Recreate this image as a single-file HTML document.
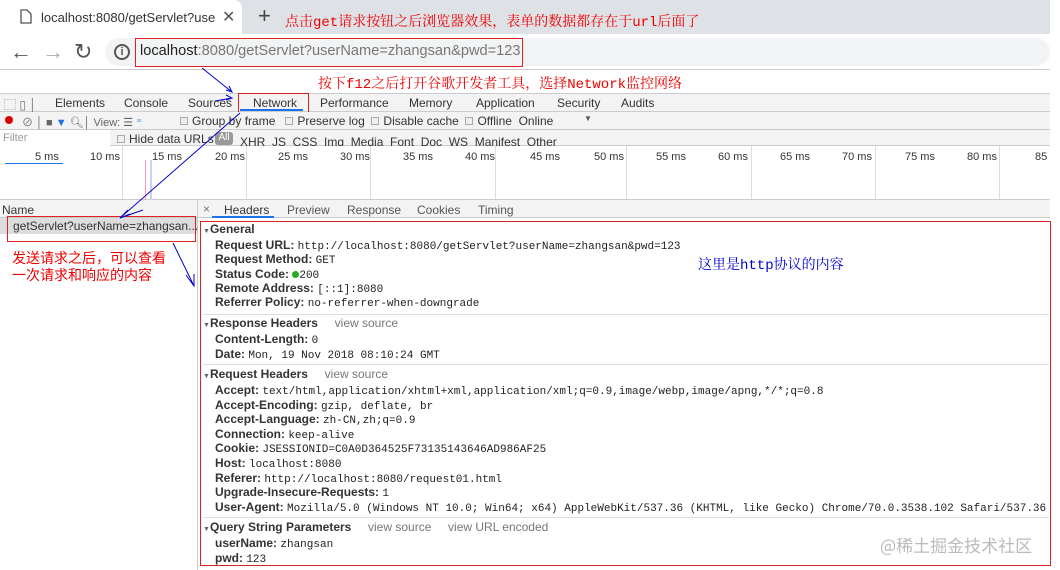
<!DOCTYPE html>
<html><head><meta charset="utf-8"><style>
*{margin:0;padding:0;box-sizing:border-box}
body{width:1060px;height:570px;position:relative;background:#fff;font-family:"Liberation Sans","Noto Sans CJK SC",sans-serif;overflow:hidden;color:#333}
.a{position:absolute;white-space:nowrap}
.red{color:#e00;font-family:"Liberation Mono","Noto Serif CJK SC",serif;font-size:14px;line-height:16px}
.t{font-size:12px;color:#333}
.b{font-weight:bold;color:#333;font-size:12px}
.m{font-family:"Liberation Mono",monospace;font-size:11px;font-weight:normal;color:#222}
.g{color:#777;font-size:12px;font-weight:normal}
.cb{display:inline-block;width:8px;height:8px;border:1px solid #aaa;background:#eee;margin-right:4px;vertical-align:0}
</style></head><body>
<div class="a" style="left:0;top:0;width:1050px;height:34px;background:#dee1e6"></div>
<div class="a" style="left:0;top:0;width:242px;height:35px;background:#fff;border-radius:0 8px 0 0"></div>
<svg class="a" style="left:20px;top:9px" width="12" height="15"><path d="M1 1h6l4 4v9H1z" fill="none" stroke="#555" stroke-width="1.3"/></svg>
<div class="a" style="left:41px;top:10px;font-size:13px;color:#333">localhost:8080/getServlet?use</div>
<div class="a" style="left:222px;top:7px;font-size:16px;color:#555">✕</div>
<div class="a" style="left:258px;top:3px;font-size:22px;color:#444">+</div>
<div class="a red" style="left:285px;top:15px">点击get请求按钮之后浏览器效果，表单的数据都存在于url后面了</div>
<div class="a" style="left:0;top:34px;width:1050px;height:36px;background:#fff;border-bottom:1px solid #ccc"></div>
<div class="a" style="left:10px;top:39px;font-size:22px;color:#555">←</div>
<div class="a" style="left:42px;top:39px;font-size:22px;color:#aaa">→</div>
<div class="a" style="left:74px;top:39px;font-size:22px;color:#555">↻</div>
<div class="a" style="left:105px;top:38px;width:945px;height:28px;background:#f1f3f4;border-radius:14px"></div>
<div class="a" style="left:114px;top:44px;width:16px;height:16px;border:2px solid #555;border-radius:50%;font-size:11px;font-weight:bold;text-align:center;line-height:12px;color:#555">i</div>
<div class="a" style="left:135px;top:38px;width:388px;height:29px;border:1px solid #d22"></div>
<div class="a" style="left:140px;top:43px;font-size:14.6px;color:#777"><span style="color:#222">localhost</span>:8080/getServlet?userName=zhangsan&amp;pwd=123</div>
<div class="a red" style="left:318px;top:77px">按下f12之后打开谷歌开发者工具，选择Network监控网络</div>
<div class="a" style="left:0;top:93px;width:1050px;height:19px;background:#f3f3f3;border-top:1px solid #ccc;border-bottom:1px solid #ccc"></div>
<div class="a t" style="left:4px;top:96px;color:#777">⬚ ▯ │</div>
<div class="a t" style="left:55px;top:96px">Elements</div>
<div class="a t" style="left:124px;top:96px">Console</div>
<div class="a t" style="left:188px;top:96px">Sources</div>
<div class="a t" style="left:253px;top:96px">Network</div>
<div class="a t" style="left:320px;top:96px">Performance</div>
<div class="a t" style="left:409px;top:96px">Memory</div>
<div class="a t" style="left:476px;top:96px">Application</div>
<div class="a t" style="left:557px;top:96px">Security</div>
<div class="a t" style="left:621px;top:96px">Audits</div>
<div class="a" style="left:240px;top:109px;width:63px;height:2px;background:#1a73e8"></div>
<div class="a" style="left:238px;top:93px;width:71px;height:20px;border:1px solid #d22"></div>
<div class="a" style="left:0;top:112px;width:1050px;height:18px;background:#f3f3f3;border-bottom:1px solid #ccc"></div>
<div class="a" style="left:5px;top:116px;width:8px;height:8px;border-radius:50%;background:#d00"></div>
<div class="a t" style="left:22px;top:114px;color:#666;font-size:11px">⊘ │ ■ <span style="color:#1a73e8">▼</span> 🔍︎│ View: ☰ <span style="color:#1a73e8">⁼</span></div>
<div class="a t" style="left:180px;top:114px"><span class="cb"></span>Group by frame &nbsp; <span class="cb"></span>Preserve log &nbsp;<span class="cb"></span>Disable cache &nbsp;<span class="cb"></span>Offline &nbsp;Online</div>
<div class="a" style="left:584px;top:114px;font-size:8px;color:#555">▼</div>
<div class="a" style="left:0;top:130px;width:1050px;height:16px;background:#f3f3f3;border-bottom:1px solid #ccc"></div>
<div class="a" style="left:0;top:130px;width:110px;height:16px;background:#fff"></div>
<div class="a t" style="left:3px;top:132px;color:#999;font-size:11px">Filter</div>
<div class="a t" style="left:117px;top:132px"><span class="cb"></span>Hide data URLs</div>
<div class="a" style="left:215px;top:132px;width:18px;height:13px;background:#999;border-radius:3px;color:#fff;font-size:10px;text-align:center">All</div>
<div class="a t" style="left:240px;top:135px">XHR &nbsp;JS &nbsp;CSS &nbsp;Img &nbsp;Media &nbsp;Font &nbsp;Doc &nbsp;WS &nbsp;Manifest &nbsp;Other</div>
<div class="a" style="left:0;top:146px;width:1050px;height:54px;background:#fff;border-bottom:1px solid #ccc"></div>
<div class="a" style="left:122px;top:146px;width:1px;height:53px;background:#ddd"></div>
<div class="a" style="left:246px;top:146px;width:1px;height:53px;background:#ddd"></div>
<div class="a" style="left:370px;top:146px;width:1px;height:53px;background:#ddd"></div>
<div class="a" style="left:495px;top:146px;width:1px;height:53px;background:#ddd"></div>
<div class="a" style="left:626px;top:146px;width:1px;height:53px;background:#ddd"></div>
<div class="a" style="left:751px;top:146px;width:1px;height:53px;background:#ddd"></div>
<div class="a" style="left:875px;top:146px;width:1px;height:53px;background:#ddd"></div>
<div class="a" style="left:999px;top:146px;width:1px;height:53px;background:#ddd"></div>
<div class="a" style="left:145px;top:160px;width:1px;height:40px;background:#f9c"></div>
<div class="a" style="left:150px;top:160px;width:2px;height:40px;background:#ccf"></div>
<div class="a" style="left:5px;top:163px;width:58px;height:1px;background:#1a73e8"></div>
<div class="a t" style="left:0;top:151px;font-size:11px;color:#333;width:1060px;height:12px">
<span class="a" style="left:35px">5 ms</span><span class="a" style="left:90px">10 ms</span><span class="a" style="left:152px">15 ms</span><span class="a" style="left:215px">20 ms</span><span class="a" style="left:278px">25 ms</span><span class="a" style="left:340px">30 ms</span><span class="a" style="left:403px">35 ms</span><span class="a" style="left:465px">40 ms</span><span class="a" style="left:530px">45 ms</span><span class="a" style="left:594px">50 ms</span><span class="a" style="left:656px">55 ms</span><span class="a" style="left:718px">60 ms</span><span class="a" style="left:780px">65 ms</span><span class="a" style="left:842px">70 ms</span><span class="a" style="left:905px">75 ms</span><span class="a" style="left:967px">80 ms</span><span class="a" style="left:1035px">85</span></div>
<div class="a" style="left:0;top:200px;width:1050px;height:18px;background:#f3f3f3;border-bottom:1px solid #ccc"></div>
<div class="a" style="left:197px;top:200px;width:1px;height:370px;background:#ccc"></div>
<div class="a t" style="left:2px;top:203px">Name</div>
<div class="a t" style="left:203px;top:202px;color:#777">×</div>
<div class="a t" style="left:224px;top:203px">Headers</div>
<div class="a" style="left:212px;top:216px;width:62px;height:2px;background:#1a73e8"></div>
<div class="a t" style="left:287px;top:203px;color:#555">Preview</div>
<div class="a t" style="left:347px;top:203px;color:#555">Response</div>
<div class="a t" style="left:417px;top:203px;color:#555">Cookies</div>
<div class="a t" style="left:478px;top:203px;color:#555">Timing</div>
<div class="a" style="left:0;top:218px;width:197px;height:16px;background:#ddd"></div>
<div class="a t" style="left:13px;top:219px">getServlet?userName=zhangsan...</div>
<div class="a" style="left:7px;top:216px;width:189px;height:26px;border:1px solid #d22"></div>
<div class="a red" style="left:12px;top:250px;font-family:'Noto Sans CJK SC',sans-serif;line-height:17px">发送请求之后，可以查看<br>一次请求和响应的内容</div>
<div class="a" style="left:200px;top:221px;width:851px;height:345px;border:1px solid #d22"></div>
<div class="a" style="left:203px;top:314px;width:846px;height:1px;background:#ddd"></div>
<div class="a" style="left:203px;top:364px;width:846px;height:1px;background:#ddd"></div>
<div class="a" style="left:203px;top:517px;width:846px;height:1px;background:#ddd"></div>
<div class="a b" style="left:203px;top:222px"><span style="font-size:7px;color:#666">▼</span>General</div>
<div class="a b" style="left:215px;top:238px">Request URL: <span class="m">http://localhost:8080/getServlet?userName=zhangsan&amp;pwd=123</span></div>
<div class="a b" style="left:215px;top:252px">Request Method: <span class="m">GET</span></div>
<div class="a b" style="left:215px;top:267px">Status Code: <span style="display:inline-block;width:7px;height:7px;border-radius:50%;background:#2a2"></span><span class="m">200</span></div>
<div class="a b" style="left:215px;top:281px">Remote Address: <span class="m">[::1]:8080</span></div>
<div class="a b" style="left:215px;top:295px">Referrer Policy: <span class="m">no-referrer-when-downgrade</span></div>
<div class="a b" style="left:203px;top:316px"><span style="font-size:7px;color:#666">▼</span>Response Headers <span class="g">&nbsp;&nbsp;&nbsp; view source</span></div>
<div class="a b" style="left:215px;top:332px">Content-Length: <span class="m">0</span></div>
<div class="a b" style="left:215px;top:347px">Date: <span class="m">Mon, 19 Nov 2018 08:10:24 GMT</span></div>
<div class="a b" style="left:203px;top:367px"><span style="font-size:7px;color:#666">▼</span>Request Headers <span class="g">&nbsp;&nbsp;&nbsp; view source</span></div>
<div class="a b" style="left:215px;top:383px">Accept: <span class="m">text/html,application/xhtml+xml,application/xml;q=0.9,image/webp,image/apng,*/*;q=0.8</span></div>
<div class="a b" style="left:215px;top:398px">Accept-Encoding: <span class="m">gzip, deflate, br</span></div>
<div class="a b" style="left:215px;top:412px">Accept-Language: <span class="m">zh-CN,zh;q=0.9</span></div>
<div class="a b" style="left:215px;top:427px">Connection: <span class="m">keep-alive</span></div>
<div class="a b" style="left:215px;top:441px">Cookie: <span class="m">JSESSIONID=C0A0D364525F73135143646AD986AF25</span></div>
<div class="a b" style="left:215px;top:456px">Host: <span class="m">localhost:8080</span></div>
<div class="a b" style="left:215px;top:471px">Referer: <span class="m">http://localhost:8080/request01.html</span></div>
<div class="a b" style="left:215px;top:485px">Upgrade-Insecure-Requests: <span class="m">1</span></div>
<div class="a b" style="left:215px;top:500px">User-Agent: <span class="m">Mozilla/5.0 (Windows NT 10.0; Win64; x64) AppleWebKit/537.36 (KHTML, like Gecko) Chrome/70.0.3538.102 Safari/537.36</span></div>
<div class="a b" style="left:203px;top:520px"><span style="font-size:7px;color:#666">▼</span>Query String Parameters <span class="g">&nbsp;&nbsp;&nbsp; view source &nbsp;&nbsp;&nbsp; view URL encoded</span></div>
<div class="a b" style="left:215px;top:536px">userName: <span class="m">zhangsan</span></div>
<div class="a b" style="left:215px;top:551px">pwd: <span class="m">123</span></div>
<div class="a" style="left:698px;top:254px;font-size:14px;color:#00c;font-family:'Liberation Mono','Noto Serif CJK SC',serif">这里是http协议的内容</div>
<div class="a" style="left:880px;top:532px;font-size:17px;color:#bbb;font-family:'Noto Sans CJK SC',sans-serif">@稀土掘金技术社区</div>
<svg class="a" style="left:0;top:0" width="1060" height="570"><g stroke="#00c" stroke-width="1" fill="none">
<path d="M202 68L232 92M226 90l6 2-3-6"/>
<path d="M215 101L232 98M226 95l6 3-6 2"/>
<path d="M240 113L120 218M128 210l-8 8 10-4"/>
<path d="M120 218L143 210"/>
<path d="M173 243L194 286M186 275l8 11 0-12"/>
</g></svg>
</body></html>
